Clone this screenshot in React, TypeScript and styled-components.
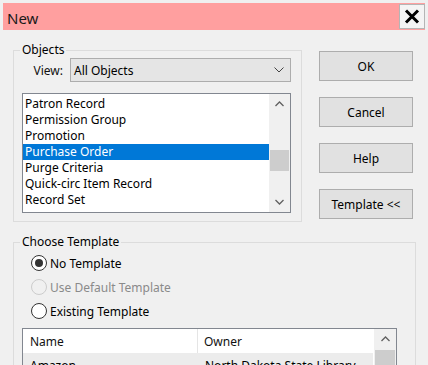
import React from "react";
import styled, { createGlobalStyle } from "styled-components";

const GlobalStyle = createGlobalStyle`
  html, body {
    margin: 0;
    padding: 0;
    background: #f0f0f0;
    overflow: hidden;
  }
  body {
    font-family: "Noto Sans", "Liberation Sans", sans-serif;
    font-size: 12px;
    color: #000;
  }
`;

const Window = styled.div`
  width: 428px;
  height: 365px;
  box-sizing: border-box;
  padding: 3px 3px 0;
  background: #f0f0f0;
  overflow: hidden;
`;

const TitleBar = styled.div`
  height: 27px;
  background: #ff9f9f;
  display: flex;
  align-items: center;
  justify-content: space-between;
  padding-left: 4px;
`;

const Title = styled.span`
  font-size: 15px;
  color: #1a1a1a;
  margin-top: 2px;
`;

const CloseButton = styled.div`
  width: 26px;
  height: 25px;
  box-sizing: border-box;
  background: #f4f4f4;
  border: 1px solid #b5b5b5;
  display: flex;
  align-items: center;
  justify-content: center;
`;

const Body = styled.div`
  padding: 12px 9px 0 10px;
`;

const TopRow = styled.div`
  display: flex;
  gap: 17px;
`;

const Group = styled.fieldset<{ $width?: number }>`
  margin: 0;
  padding: 0;
  min-width: 0;
  border: 1px solid #dcdcdc;
  ${(p) => (p.$width ? `width: ${p.$width}px;` : "")}
  box-sizing: border-box;
`;

const Legend = styled.legend`
  margin-left: 6px;
  padding: 0 2px;
  line-height: 16px;
  font-size: 12px;
`;

const GroupInner = styled.div<{ $pad: string }>`
  padding: ${(p) => p.$pad};
`;

const ViewRow = styled.div`
  display: flex;
  align-items: center;
  height: 24px;
`;

const ViewLabel = styled.span`
  flex: 1;
  text-align: right;
  padding-right: 7px;
  color: #111;
`;

const Combo = styled.div`
  width: 221px;
  height: 24px;
  box-sizing: border-box;
  background: #e5e5e5;
  border: 1px solid #adadad;
  display: flex;
  align-items: center;
  justify-content: space-between;
  padding: 0 6px 0 3px;
`;

const ListBox = styled.div`
  margin-top: 11px;
  height: 120px;
  box-sizing: border-box;
  border: 1px solid #828790;
  background: #fff;
  display: flex;
`;

const ListItems = styled.div`
  flex: 1;
  padding-top: 2px;
`;

const ListItem = styled.div<{ $selected?: boolean }>`
  height: 16px;
  line-height: 16px;
  padding-left: 2px;
  white-space: nowrap;
  background: ${(p) => (p.$selected ? "#0078d7" : "transparent")};
  color: ${(p) => (p.$selected ? "#fff" : "#000")};
`;

const ScrollBar = styled.div<{ $width: number }>`
  width: ${(p) => p.$width}px;
  background: #f0f0f0;
  display: flex;
  flex-direction: column;
  align-items: center;
`;

const ScrollArrow = styled.div`
  height: 20px;
  width: 100%;
  display: flex;
  align-items: center;
  justify-content: center;
`;

const ScrollTrack = styled.div<{ $top: number }>`
  flex: 1;
  width: 100%;
  padding-top: ${(p) => p.$top}px;
  box-sizing: border-box;
  display: flex;
  justify-content: center;
`;

const Thumb = styled.div<{ $height: number }>`
  width: calc(100% - 2px);
  height: ${(p) => p.$height}px;
  background: #cdcdcd;
`;

const ButtonColumn = styled.div`
  display: flex;
  flex-direction: column;
  gap: 16px;
  margin-top: 9px;
`;

const Button = styled.div`
  width: 94px;
  height: 30px;
  box-sizing: border-box;
  background: #e1e1e1;
  border: 1px solid #adadad;
  display: flex;
  align-items: center;
  justify-content: center;
`;

const TemplateGroup = styled(Group)`
  margin-top: 12px;
`;

const RadioRow = styled.label<{ $disabled?: boolean }>`
  display: flex;
  align-items: center;
  height: 24px;
  gap: 3px;
  padding-left: 17px;
  color: ${(p) => (p.$disabled ? "#8a8a8a" : "#000")};
`;

const RadioCircle = styled.span<{ $checked?: boolean; $disabled?: boolean }>`
  width: 16px;
  height: 16px;
  box-sizing: border-box;
  border-radius: 50%;
  border: 1px solid ${(p) => (p.$disabled ? "#cccccc" : "#333")};
  background: ${(p) => (p.$disabled ? "#f0f0f0" : "#fff")};
  display: flex;
  align-items: center;
  justify-content: center;

  &::after {
    content: "";
    width: 8px;
    height: 8px;
    border-radius: 50%;
    background: #333;
    display: ${(p) => (p.$checked ? "block" : "none")};
  }
`;

const Table = styled.div`
  margin: 5px 0 0 8px;
  width: 375px;
  height: 80px;
  box-sizing: border-box;
  border: 1px solid #828790;
  background: #fff;
  display: flex;
`;

const TableGrid = styled.div`
  flex: 1;
  display: grid;
  grid-template-columns: 175px 175px;
  grid-auto-rows: 24px;
  align-content: start;
`;

const HeaderCell = styled.div<{ $divider?: boolean }>`
  background: #fff;
  padding-left: ${(p) => (p.$divider ? 7 : 6)}px;
  display: flex;
  align-items: center;
  border-right: ${(p) => (p.$divider ? "1px solid #e5e5e5" : "0")};
  color: #111;
`;

const Cell = styled.div`
  background: #ececec;
  padding-left: 7px;
  display: flex;
  align-items: center;
  white-space: nowrap;
  overflow: hidden;
`;

const Chevron = ({ up }: { up?: boolean }) => (
  <svg width="9" height="6" viewBox="0 0 9 6">
    <path
      d={up ? "M0.5 5 L4.5 1 L8.5 5" : "M0.5 1 L4.5 5 L8.5 1"}
      fill="none"
      stroke="#606060"
      strokeWidth="1.3"
    />
  </svg>
);

const objects = [
  "Patron Record",
  "Permission Group",
  "Promotion",
  "Purchase Order",
  "Purge Criteria",
  "Quick-circ Item Record",
  "Record Set",
];

export default function App() {
  return (
    <Window>
      <GlobalStyle />
      <TitleBar>
        <Title>New</Title>
        <CloseButton>
          <svg width="16" height="15" viewBox="0 0 16 15">
            <path d="M2 1.5 L14 13.5 M14 1.5 L2 13.5" stroke="#000" strokeWidth="3" />
          </svg>
        </CloseButton>
      </TitleBar>

      <Body>
        <TopRow>
          <Group $width={289}>
            <Legend>Objects</Legend>
            <GroupInner $pad="0 10px 8px 8px">
              <ViewRow>
                <ViewLabel>View:</ViewLabel>
                <Combo>
                  <span>All Objects</span>
                  <svg width="10" height="6" viewBox="0 0 10 6">
                    <path d="M0.5 0.5 L5 5 L9.5 0.5" fill="none" stroke="#444" strokeWidth="1" />
                  </svg>
                </Combo>
              </ViewRow>
              <ListBox>
                <ListItems>
                  {objects.map((o) => (
                    <ListItem key={o} $selected={o === "Purchase Order"}>
                      {o}
                    </ListItem>
                  ))}
                </ListItems>
                <ScrollBar $width={21}>
                  <ScrollArrow>
                    <Chevron up />
                  </ScrollArrow>
                  <ScrollTrack $top={36}>
                    <Thumb $height={21} />
                  </ScrollTrack>
                  <ScrollArrow>
                    <Chevron />
                  </ScrollArrow>
                </ScrollBar>
              </ListBox>
            </GroupInner>
          </Group>

          <ButtonColumn>
            <Button>OK</Button>
            <Button>Cancel</Button>
            <Button>Help</Button>
            <Button>Template &lt;&lt;</Button>
          </ButtonColumn>
        </TopRow>

        <TemplateGroup>
          <Legend>Choose Template</Legend>
          <GroupInner $pad="1px 18px 0 0">
            <RadioRow>
              <RadioCircle $checked />
              No Template
            </RadioRow>
            <RadioRow $disabled>
              <RadioCircle $disabled />
              Use Default Template
            </RadioRow>
            <RadioRow>
              <RadioCircle />
              Existing Template
            </RadioRow>
            <Table>
              <TableGrid>
                <HeaderCell $divider>Name</HeaderCell>
                <HeaderCell>Owner</HeaderCell>
                <Cell>Amazon</Cell>
                <Cell>North Dakota State Library</Cell>
              </TableGrid>
              <ScrollBar $width={22}>
                <ScrollArrow>
                  <Chevron up />
                </ScrollArrow>
                <ScrollTrack $top={1}>
                  <Thumb $height={40} />
                </ScrollTrack>
              </ScrollBar>
            </Table>
          </GroupInner>
        </TemplateGroup>
      </Body>
    </Window>
  );
}
